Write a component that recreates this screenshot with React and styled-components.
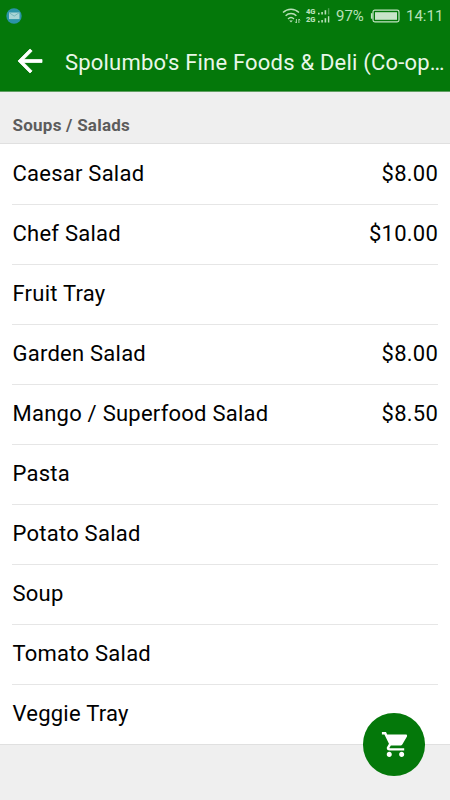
import styled, { createGlobalStyle } from 'styled-components';

const items = [
  { name: 'Caesar Salad', price: '$8.00' },
  { name: 'Chef Salad', price: '$10.00' },
  { name: 'Fruit Tray' },
  { name: 'Garden Salad', price: '$8.00' },
  { name: 'Mango / Superfood Salad', price: '$8.50' },
  { name: 'Pasta' },
  { name: 'Potato Salad' },
  { name: 'Soup' },
  { name: 'Tomato Salad' },
  { name: 'Veggie Tray' },
];

const MailIcon = () => (
  <svg width="16" height="16" viewBox="0 0 16 16">
    <circle cx="8" cy="8" r="7.7" fill="#2b93a8" />
    <rect x="3" y="4.5" width="10.5" height="6.6" fill="#a9d5d6" />
    <path d="M3.2 4.7l5 3.4 5-3.4" fill="none" stroke="#76b5ba" />
  </svg>
);

const WifiIcon = () => (
  <svg width="20" height="18" viewBox="0 0 20 18">
    <g fill="none" stroke="#b9e0b9" strokeWidth="1.4">
      <path d="M1 5.6C5.5 1.2 12.5 1.2 17 5.6" />
      <path d="M3.6 8.8c3.1-3 7.7-3 10.8 0" />
      <path d="M6 11.9c1.8-1.7 4.2-1.7 6 0" />
    </g>
    <path d="M7.2 13.6h3.6L9 15.6z" fill="#b9e0b9" />
    <path
      d="M14.4 12v4M13.2 14.7l1.2 1.3M16.9 16v-4M16.9 12l1.2 1.3"
      fill="none"
      stroke="#b9e0b9"
      strokeWidth="0.9"
    />
  </svg>
);

const SignalBars = ({ dim }) => (
  <svg width="12" height="7" viewBox="0 0 12 7">
    <g fill="#b9e0b9">
      <rect x="0" y="4.8" width="1.6" height="1.7" />
      <rect x="3.3" y="4" width="1.6" height="2.5" />
      <rect x="6.6" y="2.2" width="1.6" height="4.3" />
      <rect x="9.9" y="0.2" width="1.4" height="6.3" opacity={dim ? 0.4 : 1} />
    </g>
  </svg>
);

const BatteryIcon = () => (
  <svg width="30" height="14" viewBox="0 0 30 14">
    <rect x="3" y="1.2" width="26" height="11.6" rx="1.8" fill="none" stroke="#c3e4c3" strokeWidth="1.2" />
    <rect x="5" y="3.2" width="22" height="7.6" fill="#c9e4c9" />
    <path d="M1.7 4.2v5.5" stroke="#c3e4c3" strokeWidth="1.6" />
  </svg>
);

const BackIcon = () => (
  <svg width="36" height="36" viewBox="0 0 512 512" fill="#fff" stroke="#fff" strokeWidth="11">
    <path d="M427 234.625H167.296l119.702-119.702L256 85 85 256l171 171 29.922-29.924-118.626-119.701H427v-42.75z" />
  </svg>
);

const CartIcon = () => (
  <svg width="31" height="31" viewBox="0 0 512 512" fill="#fff">
    <path d="M169.6 377.6c-22.882 0-41.6 18.718-41.6 41.601 0 22.882 18.718 41.6 41.6 41.6s41.601-18.718 41.601-41.6c-.001-22.884-18.72-41.601-41.601-41.601zM48 51.2v41.6h41.6l74.883 151.682-31.308 50.954c-3.118 5.2-5.2 12.482-5.2 19.765 0 27.85 19.025 41.6 44.825 41.6H416v-40H177.893c-3.118 0-5.2-2.082-5.2-5.2 0-1.036 2.207-5.2 2.207-5.2l20.782-32.8h154.954c15.601 0 29.128-8.317 36.4-21.836l74.882-128.8c1.237-2.461 2.082-6.246 2.082-10.4 0-11.446-9.364-19.765-20.8-19.765H135.364L115.6 51.2H48zm326.399 326.4c-22.882 0-41.6 18.718-41.6 41.601 0 22.882 18.718 41.6 41.6 41.6S416 442.082 416 419.2c0-22.882-18.719-41.6-41.601-41.6z" />
  </svg>
);

const App = () => {
  return (
    <Screen>
      <GlobalStyle />

      <Header>
        <StatusBar>
          <MailIcon />
          <StatusGroup>
            <WifiIcon />
            <Networks>
              <Network>
                4G <SignalBars dim />
              </Network>
              <Network>
                2G <SignalBars />
              </Network>
            </Networks>
            <Percent>97%</Percent>
            <BatteryIcon />
            <Clock>14:11</Clock>
          </StatusGroup>
        </StatusBar>
        <Toolbar>
          <BackButton aria-label="Back">
            <BackIcon />
          </BackButton>
          <Title>Spolumbo's Fine Foods &amp; Deli (Co-op…</Title>
        </Toolbar>
      </Header>

      <SectionTitle>Soups / Salads</SectionTitle>

      <List>
        {items.map((item) => (
          <Item key={item.name}>
            <span>{item.name}</span>
            {item.price && <span>{item.price}</span>}
          </Item>
        ))}
      </List>

      <CartButton aria-label="Cart">
        <CartIcon />
      </CartButton>
    </Screen>
  );
};

const GlobalStyle = createGlobalStyle`
  * {
    box-sizing: border-box;
  }
  body {
    margin: 0;
    font-family: Roboto, sans-serif;
    background: #efefef;
  }
  svg {
    display: block;
    flex-shrink: 0;
  }
  button {
    border: 0;
    padding: 0;
    cursor: pointer;
  }
`;

const Screen = styled.main`
  position: relative;
  height: 800px;
  overflow: hidden;
  background: #efefef;
`;

const Header = styled.header`
  height: 92px;
  background: #04780a;
  border-bottom: 1px solid #5f9f62;
`;

const StatusBar = styled.div`
  display: flex;
  align-items: center;
  justify-content: space-between;
  height: 31px;
  padding: 0 7px 0 6px;
  color: #b9e0b9;
`;

const StatusGroup = styled.div`
  display: flex;
  align-items: center;
`;

const Networks = styled.div`
  display: flex;
  flex-direction: column;
  margin-left: 4px;
`;

const Network = styled.div`
  display: flex;
  align-items: center;
  justify-content: space-between;
  width: 24px;
  height: 8px;
  font-size: 7.5px;
  font-weight: 900;
  line-height: 8px;
`;

const Percent = styled.span`
  width: 34px;
  margin-left: 6px;
  font-size: 15px;
  line-height: 18px;
  white-space: nowrap;
`;

const Clock = styled.span`
  width: 37px;
  margin-left: 6px;
  font-size: 15px;
  line-height: 18px;
  white-space: nowrap;
`;

const Toolbar = styled.div`
  display: flex;
  align-items: center;
  height: 60px;
  padding: 0 4px 0 12px;
`;

const BackButton = styled.button`
  width: 36px;
  height: 36px;
  margin-right: 17px;
  background: transparent;
`;

const Title = styled.h1`
  flex: 1;
  margin: 0;
  color: #e9f7e9;
  font-size: 22px;
  font-weight: 400;
  letter-spacing: 0.2px;
  line-height: 30px;
  padding-top: 3px;
  white-space: nowrap;
`;

const SectionTitle = styled.h2`
  height: 52px;
  margin: 0;
  padding: 22px 12.5px 0;
  border-bottom: 1px solid #e0e0e0;
  color: #5c5c5c;
  font-size: 17px;
  font-weight: 700;
  letter-spacing: 0.25px;
  line-height: 22px;
`;

const List = styled.ul`
  margin: 0;
  padding: 0 12px;
  border-bottom: 1px solid #e0e0e0;
  background: #fff;
  list-style: none;
`;

const Item = styled.li`
  display: flex;
  align-items: center;
  justify-content: space-between;
  height: 60px;
  padding: 0 0 2px 0.5px;
  color: #000;
  font-size: 22px;
  letter-spacing: 0.24px;
  line-height: 25px;

  & + & {
    box-shadow: inset 0 1px 0 #e6e6e6;
  }
`;

const CartButton = styled.button`
  position: absolute;
  right: 24.7px;
  bottom: 24.5px;
  display: flex;
  align-items: center;
  justify-content: center;
  width: 62.6px;
  height: 62.6px;
  border-radius: 50%;
  background: #04780a;
`;

export default App;
